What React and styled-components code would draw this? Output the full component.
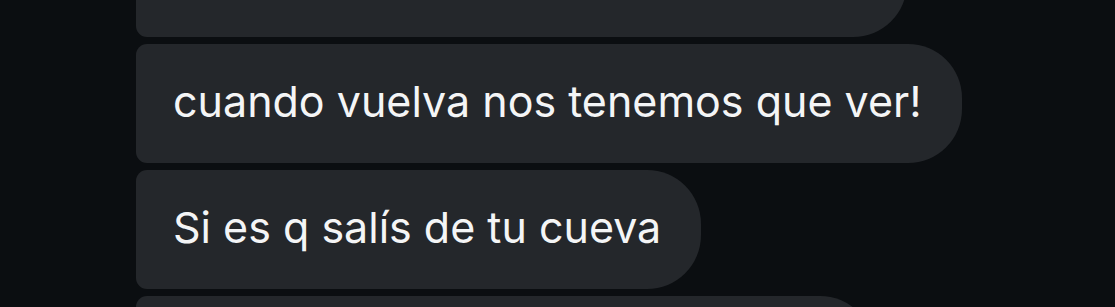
import styled, { createGlobalStyle } from 'styled-components'

const GlobalStyle = createGlobalStyle`
html, body {
  margin: 0;
  padding: 0;
  background-color: #0b0e11;
}
body {
  width: 1115px;
  height: 307px;
  overflow: hidden;
}
`

const Thread = styled.div`
display: flex;
flex-direction: column;
align-items: flex-start;
gap: 7px;
padding-left: 136px;
margin-top: -82px;
font-family: Inter, "Noto Sans", "Liberation Sans", sans-serif;
`

const Bubble = styled.div`
box-sizing: border-box;
display: flex;
align-items: center;
height: 119px;
width: ${(p) => (p.$width ? `${p.$width}px` : 'auto')};
padding: 0 40px 6px 37px;
border-radius: 11px 54px 54px 11px;
background-color: #24272b;
color: #f4f5f6;
font-size: 43px;
white-space: nowrap;
`

const messages = [
  { text: '', width: 771 },
  { text: 'cuando vuelva nos tenemos que ver!' },
  { text: 'Si es q salís de tu cueva' },
  { text: '', width: 738 },
]

function App() {
  return (
    <>
      <GlobalStyle />
      <Thread>
        {messages.map((m, i) => (
          <Bubble key={i} $width={m.width}>
            {m.text}
          </Bubble>
        ))}
      </Thread>
    </>
  )
}

export default App
